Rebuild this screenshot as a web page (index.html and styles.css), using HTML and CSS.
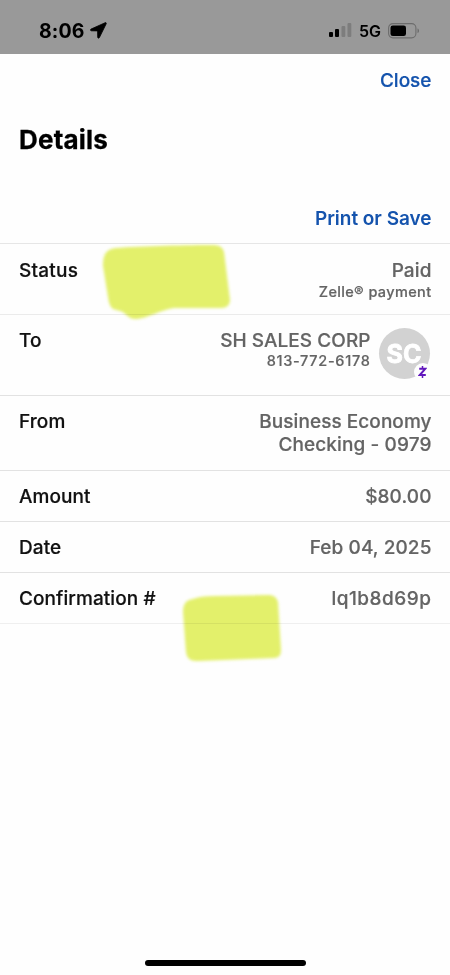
FILE: index.html
```html
<!DOCTYPE html>
<html lang="en">
<head>
<meta charset="utf-8">
<title>Details</title>
<link rel="stylesheet" href="styles.css">
</head>
<body>
<div class="screen">
  <header class="statusbar">
    <div class="clock"><span class="time">8:06</span>
      <svg class="location" width="17" height="17" viewBox="0 0 17 17"><path stroke="#000" stroke-width=".8" stroke-linejoin="round" d="M15.200 .7 1 7.100C.2 7.500.4 8.800 1.300 8.800L7.600 8.900 7.700 15.200C7.700 16.200 9 16.500 9.400 15.600L16.200 1.800C16.500 1 15.900.4 15.200.7Z"/></svg>
    </div>
    <div class="indicators">
      <svg width="23" height="15" viewBox="0 0 23 15"><rect x="0" y="9" width="4" height="5" rx="1"/><rect x="6" y="6" width="4" height="8" rx="1"/><g fill="#7d7d7d"><rect x="12.500" y="3" width="3.800" height="11" rx="1"/><rect x="18.500" y="0" width="3.800" height="14" rx="1"/></g></svg>
      <span class="network">5G</span>
      <svg width="32" height="16" viewBox="0 0 32 16"><rect x=".6" y=".6" width="27.300" height="14.300" rx="4.300" fill="none" stroke="#6c6c6c" stroke-width="1.100"/><rect x="2.500" y="2.500" width="15.500" height="10.500" rx="2.300"/><path d="M29.500 5.500c2 .6 2 4 0 4.600Z" fill="#6c6c6c"/></svg>
    </div>
  </header>
  <main class="sheet">
    <div class="toolbar"><a class="link close">Close</a></div>
    <h1>Details</h1>
    <div class="actions"><a class="link print">Print or Save</a></div>
    <dl class="rows">
      <div class="row status"><dt>Status</dt><dd>Paid<small class="zelle">Zelle® payment</small></dd></div>
      <div class="row to"><dt>To</dt><dd><div class="payee"><span class="corp">SH SALES CORP</span><small class="phone">813-772-6178</small></div>
        <div class="avatar">SC<span class="badge"><svg width="9" height="14" viewBox="0 0 9 14" fill="none" stroke="#6218bd"><path d="M1.200 3.800H7.200L1.800 10H7.800" stroke-width="2"/><path d="M4.500 1V3.500M4.500 10.500V13" stroke-width="1.500"/></svg></span></div></dd></div>
      <div class="row from"><dt>From</dt><dd><span class="business">Business Economy</span><span class="checking">Checking - 0979</span></dd></div>
      <div class="row amount"><dt>Amount</dt><dd>$80.00</dd></div>
      <div class="row date"><dt>Date</dt><dd>Feb 04, 2025</dd></div>
      <div class="row confirmation"><dt>Confirmation #</dt><dd>lq1b8d69p</dd></div>
    </dl>
  </main>
  <svg class="marker marker-top" width="140" height="90" viewBox="95 235 140 90"><path d="M116 248C140 246 190 245 214 245Q222 245 224 252L230 300Q230 307 222 308L174 308C160 310 148 318 137 319C128 320 126 312 120 311L113 309Q109 306 108 297L103 266Q102 249 116 248Z"/></svg>
  <svg class="marker marker-bottom" width="120" height="80" viewBox="175 588 120 80"><path d="M193 599Q200 596 215 596L269 595Q276 595 278 602L281 650Q281 658 274 658L198 661Q187 662 186 652L183 612Q183 600 193 599Z"/></svg>
  <div class="home-indicator"></div>
</div>
</body>
</html>
```
FILE: styles.css
```css
* { box-sizing: border-box; }
body { margin: 0; background: #fff; font-family: Inter, "Liberation Sans", sans-serif; }
.screen { position: relative; height: 975px; overflow: hidden; background: #fefefe; }
.statusbar { height: 54px; padding: 7px 30px 0 39px; background: #999; display: flex; align-items: center; justify-content: space-between; }
.clock, .indicators { display: flex; align-items: center; }
.clock { gap: 6px; }
.time { font-size: 19.5px; font-weight: 700; letter-spacing: .1px; line-height: 24px; }
.indicators { gap: 7px; }
.network { font-size: 16px; font-weight: 600; line-height: 20px; }
.toolbar, .actions { padding: 0 18.5px; text-align: right; }
.toolbar { height: 68px; padding-top: 15px; }
.link { color: #1453ad; font-size: 19px; font-weight: 500; line-height: 24px; -webkit-text-stroke: .2px currentColor; }
h1 { margin: 0; padding-left: 19px; height: 85px; font-size: 26px; font-weight: 700; line-height: 36px; letter-spacing: .2px; -webkit-text-stroke: .3px #000; }
.actions { height: 36px; }
.print { font-weight: 600; letter-spacing: -.03px; -webkit-text-stroke: 0; }
.rows { margin: 0; border-top: 1px solid #e6e6e6; }
.row { display: flex; justify-content: space-between; padding: 14px 18.5px 0 19px; border-bottom: 1px solid #e2e2e2; font-size: 19px; font-weight: 500; line-height: 24px; height: 51px; }
dt { color: #111; letter-spacing: .08px; -webkit-text-stroke: .2px #111; }
dd { margin: 0; color: #646464; text-align: right; letter-spacing: .1px; -webkit-text-stroke: .2px #646464; }
dd span, small { display: block; }
small { font-size: 14.5px; line-height: 19px; font-weight: 500; }
.zelle { letter-spacing: .37px; }
.phone { letter-spacing: .7px; margin-top: -2px; }
.status { height: 71px; border-bottom-color: #ebebeb; }
.status dt { padding-top: 1px; letter-spacing: .25px; }
.status dd { padding-top: 1px; }
.status small { margin-top: -1px; }
.to { height: 81px; }
.to dd { display: flex; gap: 8px; }
.corp { letter-spacing: .05px; }
.from { height: 75px; line-height: 23px; }
.business { letter-spacing: .05px; }
.confirmation { border-bottom-color: #efefef; }
.confirmation dd { letter-spacing: .5px; }
.avatar { position: relative; width: 51px; height: 51px; margin: -1px 2px 0 0; border-radius: 50%; background: #d2d2d2; color: #fff; font-size: 25px; font-weight: 700; line-height: 52px; text-align: center; -webkit-text-stroke: .8px #fff; }
.avatar .badge { position: absolute; right: -2px; bottom: -2px; width: 18px; height: 18px; border-radius: 50%; background: #fefefe; display: flex; align-items: center; justify-content: center; }
.marker { position: absolute; fill: #e4f16b; filter: blur(1.5px); mix-blend-mode: multiply; }
.marker-top { left: 95px; top: 235px; }
.marker-bottom { left: 175px; top: 588px; }
.home-indicator { position: absolute; left: 145px; bottom: 9px; width: 161px; height: 6px; border-radius: 3px; background: #000; }
```
